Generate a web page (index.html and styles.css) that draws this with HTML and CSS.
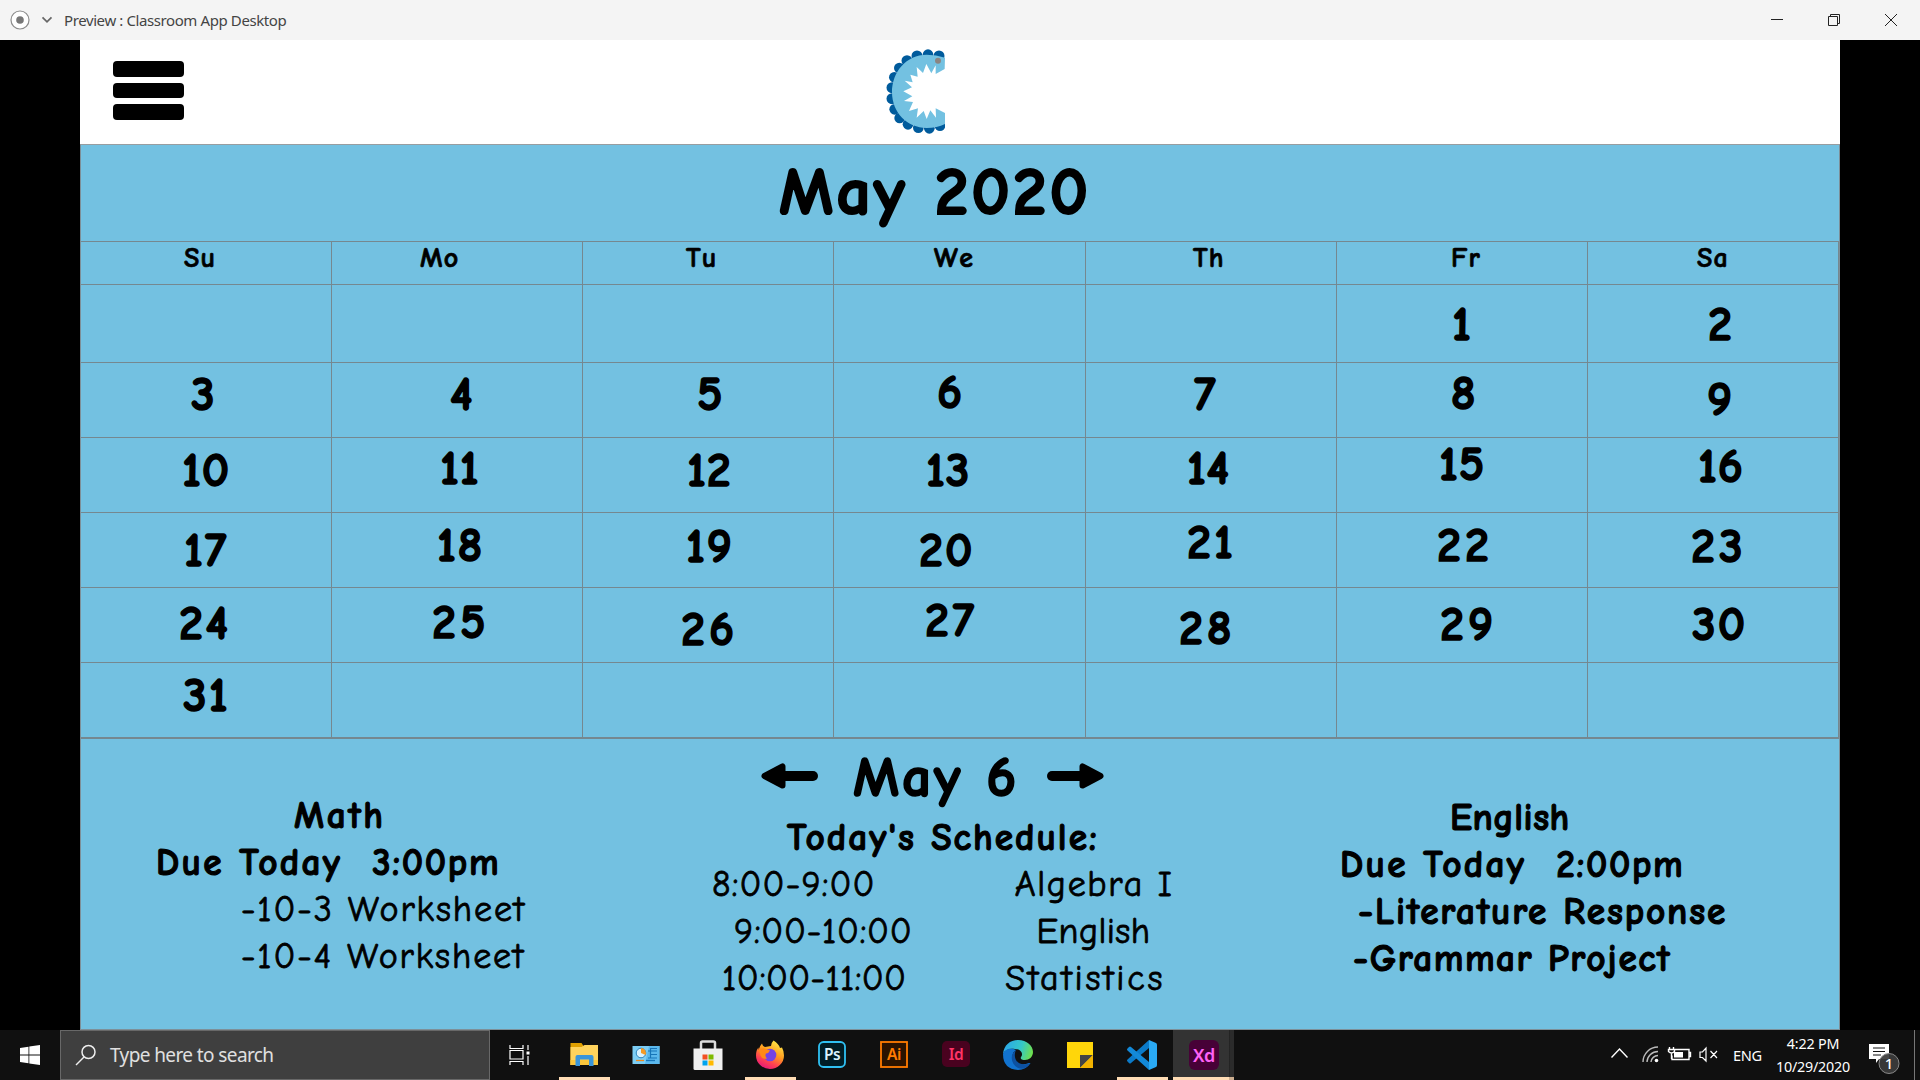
FILE: index.html
```html
<!DOCTYPE html>
<html lang="en">
<head>
<meta charset="utf-8">
<title>Preview : Classroom App Desktop</title>
<link rel="stylesheet" href="styles.css">
</head>
<body>
<header class="titlebar">
  <svg class="record" width="20" height="20" viewBox="0 0 20 20"><circle cx="10" cy="10" r="9" fill="#fff" stroke="#8c8c8c" stroke-width="1.2"/><circle cx="10" cy="10" r="3.8" fill="#777"/></svg>
  <svg class="caret" width="12" height="8" viewBox="0 0 12 8"><path d="M1.5 1.3 6 5.8l4.500-4.500" fill="none" stroke="#666" stroke-width="1.7"/></svg>
  <span class="window-title">Preview : Classroom App Desktop</span>
  <svg class="window-buttons" width="128" height="14" viewBox="0 0 128 14" fill="none" stroke="#222"><path d="M0 6.500h12M57.500 3.500h9v9h-9zM59.500 3.500v-2h9v9h-2M114 1l12 12M126 1l-12 12"/></svg>
</header>

<main class="stage">
  <div class="app">
    <div class="topbar">
      <div class="menu"><i></i><i></i><i></i></div>
      <svg class="logo" width="60" height="87" viewBox="378 54 180 261">
        <clipPath id="edge"><path d="M370 50h185v270H370z"/></clipPath>
        <g clip-path="url(#edge)">
          <g fill="#005b9c"><circle cx="537" cy="78" r="16.500"/><circle cx="504" cy="74" r="16"/><circle cx="471" cy="78" r="16.500"/><circle cx="441" cy="92" r="16.500"/><circle cx="418" cy="114" r="16"/><circle cx="403" cy="142" r="16"/><circle cx="396" cy="173" r="16.500"/><circle cx="396" cy="206" r="16.500"/><circle cx="404" cy="238" r="16"/><circle cx="419" cy="264" r="16"/><circle cx="444" cy="283" r="16"/><circle cx="475" cy="293" r="16"/><circle cx="508" cy="295" r="16"/><circle cx="540" cy="287" r="16"/></g>
          <path fill="#73c1e1" d="M555 83Q529 74 500 74C439 75 396 125 396 187c0 61 46 107 104 107q31 0 55-12v-33l-28-14 1 28-17-22-11 26-9-24-21 20 4-28-27 8 12-27-27-3 25-14-27-15 26-12-22-20 24 5-7-23 22 6-3-29 19 18 10-27 15 28 13-24v26l27-15z"/>
          <circle cx="534" cy="92" r="9" fill="#8b8582"/>
        </g>
      </svg>
    </div>

    <div class="panel">
      <h1 class="month">May 2020</h1>
      <div class="week names">
        <div class="su">Su</div><div class="mo">Mo</div><div class="tu">Tu</div><div class="we">We</div><div class="th">Th</div><div class="fr">Fr</div><div class="sa">Sa</div>
      </div>
      <div class="week first"><div></div><div></div><div></div><div></div><div></div><div class="d1">1</div><div class="d2">2</div></div>
      <div class="week"><div class="d3">3</div><div class="d4">4</div><div class="d5">5</div><div class="d6">6</div><div class="d7">7</div><div class="d8">8</div><div class="d9">9</div></div>
      <div class="week teens"><div class="d10">10</div><div class="d11">11</div><div class="d12">12</div><div class="d13">13</div><div class="d14">14</div><div class="d15">15</div><div class="d16">16</div></div>
      <div class="week"><div class="d17">17</div><div class="d18">18</div><div class="d19">19</div><div class="d20">20</div><div class="d21">21</div><div class="d22">22</div><div class="d23">23</div></div>
      <div class="week"><div class="d24">24</div><div class="d25">25</div><div class="d26">26</div><div class="d27">27</div><div class="d28">28</div><div class="d29">29</div><div class="d30">30</div></div>
      <div class="week last"><div class="d31">31</div><div></div><div></div><div></div><div></div><div></div><div></div></div>

      <div class="agenda">
        <section class="math">
          <h3>Math</h3>
          <p class="due"><span>Due Today</span><span class="time">3:00pm</span></p>
          <p class="item">-10-3 Worksheet</p>
          <p class="item">-10-4 Worksheet</p>
        </section>
        <section class="today">
          <div class="day">
            <svg width="57" height="26" viewBox="0 0 57 26"><path d="M20 13h32" stroke="#000" stroke-width="10" stroke-linecap="round"/><path d="M3.500 13 21.500 3.500v19z" stroke="#000" stroke-width="6" stroke-linejoin="round"/></svg>
            <h2>May 6</h2>
            <svg width="57" height="26" viewBox="0 0 57 26"><path d="M37 13H5" stroke="#000" stroke-width="10" stroke-linecap="round"/><path d="M53.500 13 35.500 3.500v19z" stroke="#000" stroke-width="6" stroke-linejoin="round"/></svg>
          </div>
          <h3>Today's Schedule:</h3>
          <p class="slot slot-a"><span>8:00-9:00</span><span class="subject">Algebra I</span></p>
          <p class="slot slot-b"><span>9:00-10:00</span><span class="subject">English</span></p>
          <p class="slot slot-c"><span>10:00-11:00</span><span class="subject">Statistics</span></p>
        </section>
        <section class="english">
          <h3>English</h3>
          <p class="due"><span>Due Today</span><span class="time">2:00pm</span></p>
          <p class="literature">-Literature Response</p>
          <p class="grammar">-Grammar Project</p>
        </section>
      </div>
    </div>
  </div>
</main>

<footer class="taskbar">
  <div class="start"><svg width="20" height="20" viewBox="0 0 20 20" fill="#fff"><path d="M0 3l8.500-1.300v7.900H0zM9.300 1.600 20 0v9.600H9.300zM0 10.400h8.500v7.900L0 17zM9.300 10.400H20V20L9.300 18.400z"/></svg></div>
  <div class="search"><svg width="22" height="22" viewBox="0 0 22 22" fill="none" stroke="#eee" stroke-width="1.500"><circle cx="13.500" cy="8" r="6.500"/><path d="M9 13 1 21"/></svg><span>Type here to search</span></div>
  <div class="taskview"><svg width="22" height="20" viewBox="0 0 22 20" fill="none" stroke="#fff" stroke-width="1.200"><path d="M1 0v3.500h13V0M1 5.500h13v8.500H1zM1 20v-3.500h13V20M19 0v5M19 11v9"/><path d="M17.500 6.500h3v3h-3z" fill="#fff" stroke="none"/></svg></div>
  <div class="tasks">
    <div class="task open"><svg width="30" height="30" viewBox="0 0 30 30"><path d="M1.500 3h11l2 3H28v19H1.500z" fill="#e0a000"/><path d="M1.500 7h11l3-2H29v20H1.500z" fill="#ffd35c"/><path d="M1.500 20H29v5H1.500z" fill="#fbc63c"/><path d="M6.500 26V17q0-2 2-2h14q2 0 2 2v9h-4.500v-6.500h-9V26z" fill="#3a95d9"/></svg></div>
    <div class="task"><svg width="30" height="30" viewBox="0 0 30 30"><path d="M1.500 6h27v18h-27z" fill="#7ccdf4"/><path d="M18 6h10.500v18H14z" fill="#5bb8ec"/><circle cx="10" cy="13" r="4.800" fill="#d8f1fd" stroke="#2a83bd"/><path d="M10 13V8a5 5 0 0 1 4.500 7z" fill="#f59a23"/><path d="M17 11h9M19 14.500h7M17 18h9M20 8.500h6M19.500 8v10" stroke="#1775b8" stroke-width="1.200"/><path d="M5 20.500h8" stroke="#f08a1d" stroke-width="1.300"/><path d="M15 20.500h9" stroke="#1775b8" stroke-width="1.300"/></svg></div>
    <div class="task"><svg width="30" height="30" viewBox="0 0 30 30"><path d="M8 9V3q0-1.500 1.500-1.500h11Q22 1.500 22 3v6" fill="none" stroke="#ddd" stroke-width="2.500"/><path d="M.5 8.500h29V30H2Q.5 30 .5 28.500z" fill="#f0f0f0"/><path d="M9.500 14.500h5v5h-5z" fill="#f25022"/><path d="M15.500 14.500h5v5h-5z" fill="#7fba00"/><path d="M9.500 20.500h5v5h-5z" fill="#00a4ef"/><path d="M15.500 20.500h5v5h-5z" fill="#ffb900"/></svg></div>
    <div class="task open"><svg width="30" height="30" viewBox="0 0 30 30"><defs><linearGradient id="fx" x1=".8" y1="0" x2=".3" y2="1"><stop offset="0" stop-color="#fff14a"/><stop offset=".45" stop-color="#ff9a1f"/><stop offset=".75" stop-color="#ff4052"/><stop offset="1" stop-color="#e5177b"/></linearGradient></defs><path d="M18.500.5Q24 4 25 8l2-.5Q29 11 29 15.500A14 13.500 0 0 1 1 15.500Q1 10 3.500 7.500V10Q5 5.500 7 3.500 7.500 6 10 7l6-1Q16 3 18.500.5z" fill="url(#fx)"/><circle cx="15" cy="15" r="6.300" fill="#7543e5"/><path d="M4 10q4-3 7-1l4 1.500q-1 2.500-4 3-1.500 3 1 5-5 1-6.500-3z" fill="#ff8a16"/></svg></div>
    <div class="task"><svg width="30" height="30" viewBox="0 0 30 30"><rect x="2" y="2" width="26" height="25" rx="4.500" fill="#001d26" stroke="#2fc1f3" stroke-width="1.800"/><text class="glyph" x="15" y="20" fill="#dbf3ff">Ps</text></svg></div>
    <div class="task"><svg width="30" height="30" viewBox="0 0 30 30"><rect x="2" y="2" width="26" height="25" fill="#2a1300" stroke="#ff7c00" stroke-width="1.800"/><text class="glyph" x="15" y="20" fill="#ff7c00">Ai</text></svg></div>
    <div class="task"><svg width="30" height="30" viewBox="0 0 30 30"><rect x="1" y="1" width="28" height="26" rx="5" fill="#49021f"/><text class="glyph" x="15" y="19.500" fill="#ff3366">Id</text></svg></div>
    <div class="task"><svg width="30" height="30" viewBox="0 0 30 30"><defs><linearGradient id="ed" x1="0" y1=".3" x2="1" y2=".5"><stop offset="0" stop-color="#2aa5ea"/><stop offset=".6" stop-color="#35c8c8"/><stop offset="1" stop-color="#6fe04e"/></linearGradient></defs><path d="M0 14C1 5 7 0 15 0c9 0 15 6 15 12 0 5-4 8-8 8-3 0-5-1-4-3 3-4-1-8-6-8C6 8 2 10 0 14z" fill="url(#ed)"/><path d="M0 14C2 8 9 8 13 10c-3 2-4 5-3 8 2 6 9 8 16 5l1.500 0Q23 30 15 30 0 29 0 14z" fill="#1273cf"/><path d="M13 10c-6 4-6 13 2 18 5 2 9 0 12.500-5-7 3-13 1-15-4-1-3-1-6 .5-9z" fill="#0d51a0"/></svg></div>
    <div class="task"><svg width="30" height="30" viewBox="0 0 30 30"><path d="M2 2h26v26H2z" fill="#ffd60a"/><path d="M15 15h13L15 28z" fill="#444"/><path d="M28 15v13H15z" fill="#f2b200"/></svg></div>
    <div class="task open"><svg width="30" height="30" viewBox="0 0 30 30"><path d="M22 0v8L4 23q-1 1-2 0L.5 21.500q-1-1 0-2z" fill="#0b7ac8"/><path d="M22 30v-8L4 7Q3 6 2 7L.5 8.500q-1 1 0 2z" fill="#1389d8"/><path d="M22 0l7 3q1 .5 1 2v20q0 1.500-1 2l-7 3z" fill="#2aaaf5"/></svg></div>
    <div class="task active"><svg width="30" height="30" viewBox="0 0 30 30"><rect width="30" height="30" rx="6" fill="#470137"/><text class="glyph large" x="15" y="21.500" fill="#ff61f6">Xd</text></svg></div>
  </div>
  <div class="tray">
    <svg class="tray-icons" width="108" height="20" viewBox="0 0 108 20" fill="none" stroke="#fff" stroke-width="1.400"><path d="M.5 12.500 8.500 4l8 8.500"/><g stroke="#bbb"><path d="M32 17A15 15 0 0 1 47 2M36 17A11 11 0 0 1 47 6.500M40 17A7 7 0 0 1 47 10.500"/></g><circle cx="45.500" cy="15.500" r="1.800" fill="#fff" stroke="none"/><path d="M64 4.500h14v10H61v-4M78 7.500h1.500v4H78M58.500 2v3M62.500 2v3M57.500 4.500h6v2q-3 3-6 0zM60.500 8v6"/><path d="M63 7h9v5.500h-9z" fill="#fff" stroke="none"/><path d="M89 7v5.500h2.500L95 16V3l-3.500 4zM99.500 6l6.500 7M106 6l-6.500 7" stroke-width="1.200"/></svg>
    <span class="lang">ENG</span>
    <div class="clock"><span>4:22 PM</span><span>10/29/2020</span></div>
    <div class="notify"><svg width="32" height="32" viewBox="0 0 32 32"><path d="M0 1h20v15H10l-3 4v-4H0z" fill="#fff"/><path d="M4 5h12M4 8.500h12M4 12h8" stroke="#111" stroke-width="1.200"/><circle cx="20" cy="20.500" r="10" fill="#3b3b3b" fill-opacity=".93" stroke="#888"/><text class="count" x="20" y="26" fill="#fff">1</text></svg></div>
    <div class="peek"></div>
  </div>
</footer>
</body>
</html>
```
FILE: styles.css
```css
* { box-sizing: border-box; margin: 0; padding: 0; }
body {
  width: 1920px;
  height: 1080px;
  overflow: hidden;
  display: flex;
  flex-direction: column;
  background: #000;
  font-family: "Noto Sans", "Open Sans", sans-serif;
}
svg { display: block; flex: none; }

/* window title bar */
.titlebar {
  height: 40px;
  background: #f4f4f4;
  display: flex;
  align-items: center;
  padding: 0 14px 0 10px;
}
.caret { margin-left: 11px; }
.window-title { margin-left: 11px; font-size: 15px; letter-spacing: -.4px; color: #444; }
.window-buttons { margin-left: auto; margin-right: 7px; }

/* previewed app */
.stage { height: 990px; padding: 0 80px; }
.app {
  height: 990px;
  display: flex;
  flex-direction: column;
  background: #fff;
  color: #000;
  font-family: "Comic Neue", "Chalkboard SE", "Comic Sans MS", cursive;
  font-weight: 700;
  white-space: nowrap;
}
.topbar { height: 104px; display: flex; align-items: flex-start; padding-left: 33px; }
.menu { width: 71px; display: flex; flex-direction: column; gap: 6px; padding-top: 21px; }
.menu i { height: 15.500px; background: #000; border-radius: 4px; }
.logo { margin: 8px 0 0 702px; }

.panel {
  flex: 1;
  background: #73c1e1;
  border: 1px solid #7d8f98;
  border-top-color: #989da0;
}
.month {
  height: 96px;
  padding: 25px 0 0 698px;
  font-size: 67.500px;
  line-height: .68;
  letter-spacing: 3px;
  -webkit-text-stroke: 2.200px #000;
}
.week {
  height: 75px;
  display: grid;
  grid-template-columns: repeat(3, 251px) 252px repeat(3, 251px);
  font-size: 48px;
  line-height: .68;
  letter-spacing: 4px;
  -webkit-text-stroke: 1.500px #000;
}
.week > div { border: solid #758890; border-width: 0 1px 1px 0; }
.week.names {
  height: 44px;
  border-top: 1px solid #758890;
  font-size: 28px;
  letter-spacing: 1.200px;
  -webkit-text-stroke: .700px #000;
}
.week.names > div { padding-top: 7px; }
.week.first { height: 78px; }
.week.last { height: 76px; letter-spacing: 2px; }
.week.last > div { border-bottom-width: 2px; }
.week.teens { letter-spacing: 1px; }

.week .su { padding-left: 103px; }
.week .mo { padding-left: 88px; }
.week .tu { padding-left: 103px; }
.week .we { padding-left: 100px; letter-spacing: 3px; }
.week .th { padding-left: 107px; }
.week .fr { padding-left: 114px; }
.week .sa { padding-left: 109px; }

.d1 { padding: 24px 0 0 115px; }
.d2 { padding: 24px 0 0 120px; }
.d3 { padding: 16px 0 0 110px; }
.d4 { padding: 16px 0 0 118px; }
.d5 { padding: 16px 0 0 114px; }
.d6 { padding: 14px 0 0 103px; }
.d7 { padding: 16px 0 0 108px; }
.d8 { padding: 15px 0 0 114px; }
.d9 { padding: 21px 0 0 119px; }
.d10 { padding: 17px 0 0 101px; }
.d11 { padding: 15px 0 0 108px; }
.d12 { padding: 17px 0 0 104px; }
.d13 { padding: 17px 0 0 92px; }
.d14 { padding: 15px 0 0 101px; }
.d15 { padding: 11px 0 0 102px; }
.d16 { padding: 13px 0 0 110px; }
.d17 { padding: 22px 0 0 103px; letter-spacing: 2px; }
.d18 { padding: 17px 0 0 105px; letter-spacing: 2px; }
.d19 { padding: 18px 0 0 103px; letter-spacing: 2px; }
.d20 { padding: 22px 0 0 85px; letter-spacing: 2px; }
.d21 { padding: 14px 0 0 101px; letter-spacing: 3px; }
.d22 { padding: 17px 0 0 100px; }
.d23 { padding: 18px 0 0 103px; }
.d24 { padding: 20px 0 0 98px; }
.d25 { padding: 19px 0 0 100px; }
.d26 { padding: 26px 0 0 98px; }
.d27 { padding: 17px 0 0 91px; }
.d28 { padding: 25px 0 0 93px; }
.d29 { padding: 21px 0 0 103px; }
.d30 { padding: 21px 0 0 104px; letter-spacing: 2px; }
.d31 { padding: 17px 0 0 102px; }

/* agenda under the calendar */
.agenda { display: grid; grid-template-columns: 519px 680px 1fr; }
.agenda h3, .agenda p {
  height: 47px;
  font-size: 37.300px;
  line-height: .68;
  -webkit-text-stroke: 1.100px #000;
}
.agenda p { display: flex; }
.math { padding-top: 64px; }
.math h3 { padding-left: 213px; letter-spacing: 2.700px; }
.math .due { padding-left: 75px; letter-spacing: 2.300px; }
.time { margin-left: 30px; letter-spacing: 1.700px; }
.agenda .item, .agenda .slot { font-weight: 400; font-size: 36px; -webkit-text-stroke: .800px #000; }
.math .item { padding-top: 1px; padding-left: 160px; letter-spacing: 1.900px; }

.today { padding-top: 19px; }
.day { height: 67px; display: flex; padding-left: 161px; }
.day h2 {
  width: 156px;
  margin: 0 38px 0 35px;
  font-size: 57.500px;
  line-height: .68;
  letter-spacing: 2.700px;
  -webkit-text-stroke: 1.700px #000;
}
.day svg { margin-top: 5px; }
.agenda .today h3 { height: 48px; padding-left: 187px; letter-spacing: 2px; }
.slot-a { padding-left: 112px; letter-spacing: 1.200px; }
.slot-a .subject { margin-left: 139px; letter-spacing: 1.700px; }
.slot-b { padding-left: 134px; letter-spacing: .800px; }
.slot-b .subject { margin-left: 124px; letter-spacing: .400px; }
.slot-c { padding-left: 122px; letter-spacing: .400px; }
.slot-c .subject { margin-left: 99px; letter-spacing: 2.800px; }

.english { padding-top: 66px; }
.english h3 { padding-left: 170px; letter-spacing: .500px; }
.english .due { padding-left: 60px; letter-spacing: 2.300px; }
.literature { padding-left: 78px; letter-spacing: 1.850px; }
.grammar { padding-left: 73px; letter-spacing: 1.550px; }

/* Windows taskbar */
.taskbar { height: 50px; display: flex; background: #101010; color: #fff; }
.start { width: 60px; display: flex; align-items: center; justify-content: center; }
.search {
  width: 430px;
  display: flex;
  align-items: center;
  padding-left: 14px;
  background: #3f3f3f;
  border: 1px solid #686868;
  color: #e0e0e0;
  font-size: 19px;
  letter-spacing: -.600px;
}
.search span { margin-left: 13px; }
.taskview { width: 63px; display: flex; align-items: center; padding-left: 19px; }
.tasks { display: flex; }
.task { width: 62px; display: flex; justify-content: center; padding-top: 10px; }
.task.open {
  background: linear-gradient(#ffdcb4, #ffdcb4) 50% 100% / 51px 3px no-repeat;
}
.task.active {
  background:
    linear-gradient(#ffdcb4, #ffdcb4) 0 100% / 56px 3px no-repeat,
    linear-gradient(#ccae90, #ccae90) 100% 100% / 5px 3px no-repeat,
    linear-gradient(90deg, #333 56px, #1c1c1c 56px, #2b2b2b 57px);
  width: 61px;
}
.glyph { font: 600 15.500px "Noto Sans", sans-serif; text-anchor: middle; letter-spacing: -.500px; }
.glyph.large { font-size: 18px; }
.tray { margin-left: auto; display: flex; align-items: center; }
.tray-icons { margin-right: 14px; }
.lang { width: 42px; font-size: 14.600px; letter-spacing: -.300px; }
.clock {
  width: 76px;
  display: flex;
  flex-direction: column;
  align-items: center;
  font-size: 14.300px;
  line-height: 23px;
  letter-spacing: -.200px;
}
.notify { width: 45px; margin: 8px 0 0 18px; }
.count { font: 500 15px "Noto Sans", sans-serif; text-anchor: middle; }
.peek { width: 6px; height: 50px; border-left: 1px solid #777; }
```
